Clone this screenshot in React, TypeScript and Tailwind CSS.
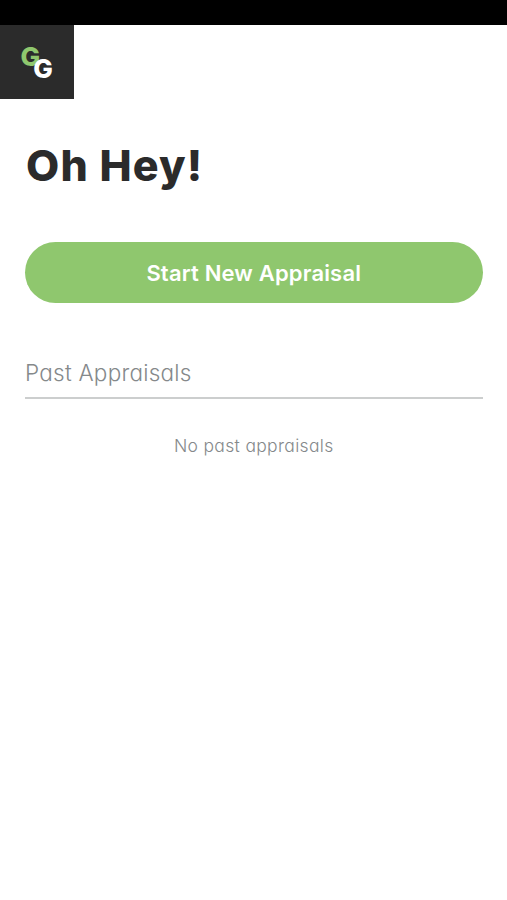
function Logo() {
  return (
    <svg width="74" height="73" viewBox="0 0 74 73" className="font-['Inter',sans-serif] text-[26px] font-extrabold">
      <text x="20.6" y="40.8" fill="#8fc76e">G</text>
      <text x="33.2" y="53" fill="#fff">G</text>
    </svg>
  );
}

export default function App() {
  return (
    <div className="min-h-[900px] bg-white font-['Inter',sans-serif]">
      <div className="h-[25px] bg-black" />
      <header className="h-[73.5px] w-[74px] bg-[#2b2b2b]">
        <Logo />
      </header>
      <main className="flex flex-col pr-[24.5px] pl-[25px] pt-[38.5px]">
        <h1 className="h-[57px] whitespace-nowrap pl-px text-[43px] leading-[56px] font-extrabold tracking-[1.15px] text-[#2b2b2b]">
          Oh Hey!
        </h1>
        <button className="mt-12 h-[61px] rounded-full bg-[#8fc76e] pt-0.5 text-[22px] font-semibold tracking-[0.17px] text-white">
          Start New Appraisal
        </button>
        <h2 className="mt-[53px] h-[43px] border-b-2 border-[#cccece] pt-px text-[22.5px] leading-8 font-light tracking-[0.25px] text-[#85898b] [font-feature-settings:'cv11']">
          Past Appraisals
        </h2>
        <p className="mt-[35px] text-center text-[17.5px] leading-6 font-light tracking-[0.33px] text-[#85898b] [font-feature-settings:'cv11']">
          No past appraisals
        </p>
      </main>
    </div>
  );
}
